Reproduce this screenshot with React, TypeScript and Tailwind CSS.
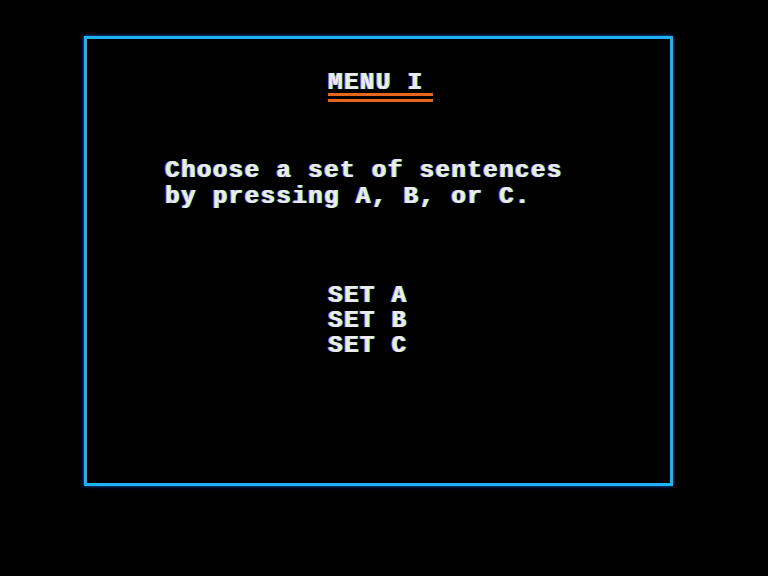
const glow = "[text-shadow:-1px_0_#b070ff,1px_0_#60ff80]"

export default function App() {
  return (
    <div className="w-[768px] h-[576px] bg-black overflow-hidden pt-[36px] pl-[84px]">
      <div className="w-[589px] h-[450px] border-[3px] border-[#1fb2f2] shadow-[0_0_3px_#1070ff]">
        <div
          className={`flex flex-col pl-[78px] text-[24px] font-bold tracking-[1.5px] text-[#ecebf2] ${glow}`}
          style={{ fontFamily: '"Liberation Mono", "DejaVu Sans Mono", monospace' }}
        >
          <div className="pl-[163px] mt-[31px]">
            <div className="leading-[25px] whitespace-pre">MENU I</div>
            <div className="mt-[-2px] w-[105px] h-[3px] bg-[#e8661c]" />
            <div className="mt-[3px] w-[105px] h-[3px] bg-[#e8661c]" />
          </div>
          <div className="mt-[56px] leading-[26px] whitespace-pre">
            <div>Choose a set of sentences</div>
            <div>by pressing A, B, or C.</div>
          </div>
          <div className="pl-[163px] mt-[73px] leading-[25px] whitespace-pre">
            <div>SET A</div>
            <div>SET B</div>
            <div>SET C</div>
          </div>
        </div>
      </div>
    </div>
  )
}
